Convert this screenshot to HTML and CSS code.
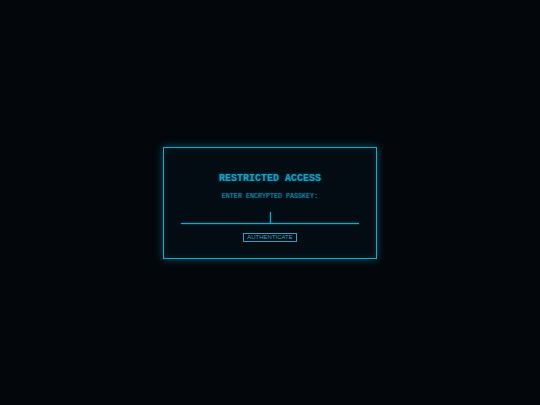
FILE: index.html
```html
<!DOCTYPE html>
<html>
<head>
<meta charset="utf-8">
<link rel="stylesheet" href="styles.css">
</head>
<body>
<div class="screen">
  <div class="panel">
    <h1 class="title">RESTRICTED ACCESS</h1>
    <p class="prompt">ENTER ENCRYPTED PASSKEY:</p>
    <div class="field"><span class="caret"></span></div>
    <button class="btn">AUTHENTICATE</button>
  </div>
</div>
</body>
</html>
```
FILE: styles.css
```css
html, body {
  margin: 0;
  padding: 0;
  background: #03070b;
}
.screen {
  width: 540px;
  height: 405px;
  display: flex;
  align-items: center;
  justify-content: center;
}
.panel {
  height: 110px;
  width: 178px;
  padding: 0 17px;
  border: 1px solid #1fa6c6;
  background: #040c13;
  box-shadow: 0 0 8px rgba(20, 170, 210, 0.45), inset 0 0 6px rgba(20, 170, 210, 0.2);
  box-sizing: content-box;
  display: flex;
  flex-direction: column;
  align-items: center;
}
.title {
  margin: 25px 0 0;
  font-family: "Liberation Mono", monospace;
  font-weight: bold;
  font-size: 10px;
  line-height: 12px;
  color: #1c9fc2;
  text-shadow: 0 0 3px rgba(30, 170, 210, 0.6);
}
.prompt {
  margin: 7px 0 0;
  font-family: "Liberation Mono", monospace;
  font-size: 6.7px;
  line-height: 8px;
  color: #1a8fb0;
  text-shadow: 0 0 2px rgba(30, 170, 210, 0.5);
}
.field {
  align-self: stretch;
  height: 11px;
  margin-top: 12px;
  border-bottom: 1px solid #1fa6c6;
  display: flex;
  justify-content: center;
  align-items: flex-end;
  filter: drop-shadow(0 0 1px rgba(30, 170, 210, 0.7));
}
.caret {
  width: 1px;
  height: 11px;
  background: #1fa6c6;
}
.btn {
  margin-top: 9px;
  font-family: "Liberation Sans", sans-serif;
  font-size: 6px;
  line-height: 7px;
  padding: 0 3px;
  height: 9px;
  background: transparent;
  color: #1fa6c6;
  border: 1px solid #1fa6c6;
  border-radius: 0;
}
```
